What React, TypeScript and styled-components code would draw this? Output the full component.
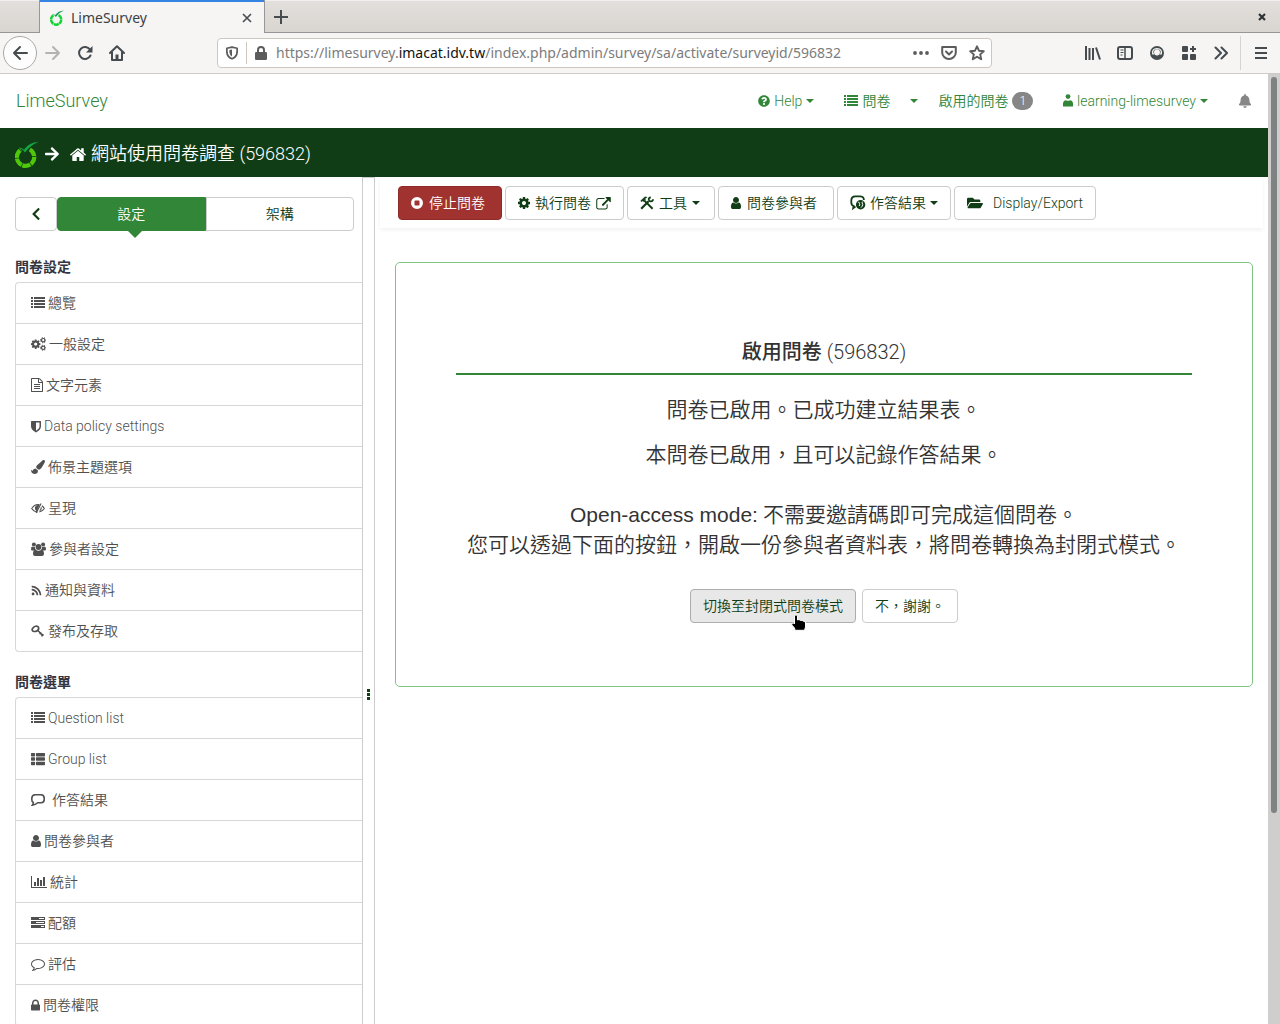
import React from 'react';
import styled, { createGlobalStyle, css } from 'styled-components';
import {
  FaQuestionCircle, FaBell, FaPaintBrush, FaRss, FaFolderOpen, FaArrowRight, FaChevronLeft, FaThList,
} from 'react-icons/fa';

const latin = "Roboto, 'Noto Sans CJK TC', sans-serif";
const chromeFont = "'Noto Sans', sans-serif";
const line = '#d8d8d8';
const green = '#328637';
const deep = '#103d15';

const GlobalStyle = createGlobalStyle`
  * { box-sizing: border-box; }
  body { margin: 0; background: #fff; font-family: ${latin}; font-weight: 350; font-size: 14px; line-height: 20px; color: #333; }
  button, input { font: inherit; color: inherit; margin: 0; }
  button { cursor: pointer; }
  a { color: inherit; text-decoration: none; }
  ul { list-style: none; margin: 0; padding: 0; }
  svg { display: block; flex: none; }
`;

/* ---------- icons ---------- */

type IconDef = { box: string; w: number; h: number; body: React.ReactNode };

const cogPath = 'M1152 896q0-106-75-181t-181-75-181 75-75 181 75 181 181 75 181-75 75-181zm512-109v222q0 12-8 23t-20 13l-185 28q-19 54-39 91 35 50 107 138 10 12 10 25t-9 23q-27 37-99 108t-94 71q-12 0-26-9l-138-108q-44 23-91 38-16 136-29 186-7 28-36 28h-222q-14 0-24.5-8.5t-11.5-21.5l-28-184q-49-16-90-37l-141 107q-10 9-25 9-14 0-25-11-126-114-165-168-7-10-7-23 0-12 8-23 15-21 51-66.5t54-70.5q-27-50-41-99l-183-27q-13-2-21-12.5t-8-23.5v-222q0-12 8-23t19-13l186-28q14-46 39-92-40-57-107-138-10-12-10-24 0-10 9-23 26-36 98.5-107.5t94.5-71.5q13 0 26 10l138 107q44-23 91-38 16-136 29-186 7-28 36-28h222q14 0 24.5 8.5t11.5 21.5l28 184q49 16 90 37l142-107q9-9 24-9 13 0 25 10 129 119 165 170 7 8 7 22 0 12-8 23-15 21-51 66.5t-54 70.5q26 50 41 98l183 28q13 2 21 12.5t8 23.5z';

const icons: Record<string, IconDef> = {
  list: {
    box: '0 0 14 14', w: 14, h: 14,
    body: <path d="M0 1h2v2H0zM3 1h11v2H3zM0 4h2v2H0zM3 4h11v2H3zM0 7h2v2H0zM3 7h11v2H3zM0 10h2v2H0zM3 10h11v2H3z" />,
  },
  cog: { box: '128 128 1536 1536', w: 12, h: 12, body: <path d={cogPath} /> },
  cogs: {
    box: '0 0 15 14', w: 15, h: 14,
    body: (
      <>
        <g transform="translate(-0.9 1.6) scale(0.0062)"><path d={cogPath} /></g>
        <g fill="none" stroke="currentColor">
          <circle cx="12.2" cy="3.2" r="1.7" strokeWidth="1.2" />
          <circle cx="12.2" cy="10.8" r="1.7" strokeWidth="1.2" />
          <path strokeWidth="1" strokeDasharray="1.2 1.2" d="M9.6 3.2a2.6 2.6 0 1 1 5.2 0a2.6 2.6 0 1 1-5.2 0M9.6 10.8a2.6 2.6 0 1 1 5.2 0a2.6 2.6 0 1 1-5.2 0" />
        </g>
      </>
    ),
  },
  file: {
    box: '128 0 1536 1792', w: 12, h: 14,
    body: <path d="M1596 380q28 28 48 76t20 88v1152q0 40-28 68t-68 28h-1344q-40 0-68-28t-28-68v-1600q0-40 28-68t68-28h896q40 0 88 20t76 48zm-444-244v376h376q-10-29-22-41l-313-313q-12-12-41-22zm384 1528v-1024h-416q-40 0-68-28t-28-68v-416h-768v1536h1280zm-1024-864q0-14 9-23t23-9h704q14 0 23 9t9 23v64q0 14-9 23t-23 9h-704q-14 0-23-9t-9-23v-64zm736 224q14 0 23 9t9 23v64q0 14-9 23t-23 9h-704q-14 0-23-9t-9-23v-64q0-14 9-23t23-9h704zm0 256q14 0 23 9t9 23v64q0 14-9 23t-23 9h-704q-14 0-23-9t-9-23v-64q0-14 9-23t23-9h704z" />,
  },
  shield: {
    box: '0 0 10 13', w: 10, h: 13,
    body: <path fillRule="evenodd" d="M.6 1h8.8q.6 0 .6.6V6.600C10 9.200 7.600 11.200 5 12.400C2.400 11.200 0 9.200 0 6.600V1.600Q0 1 .6 1zM5 2.500V10.700C6.800 9.700 8.500 8.200 8.500 6.600V2.500z" />,
  },
  eye: {
    box: '0 0 14 14', w: 14, h: 14,
    body: (
      <g fill="none" stroke="currentColor" strokeWidth="1.1">
        <path d="M6.600 11.100Q3 10.800.7 7.500Q3.200 3.600 7 3.500L8.600 3.700M10.900 4.800Q12.500 5.900 13.300 7.500Q11.600 10.400 8.300 11M10.100 2.600L5.200 12" />
        <path d="M7.600 4.500Q4.600 4.600 4.500 7.200Q4.600 8.700 5.600 9.500z" fill="currentColor" />
        <path d="M10.200 6.200Q10.500 8.600 8.700 9.700" />
      </g>
    ),
  },
  users: {
    box: '0 0 15 14', w: 15, h: 14,
    body: (
      <>
        <circle cx="2.900" cy="2.500" r="2" /><circle cx="12.100" cy="2.500" r="2" />
        <path d="M0 7.500Q0 4.500 1.200 4.500Q3 5.500 4 4.800Q3.700 6.800 4.900 7.900L3.600 8.500H1.200Q0 8.400 0 7.500zM15 7.500Q15 4.500 13.800 4.500Q12 5.500 11 4.800Q11.300 6.800 10.100 7.900L11.400 8.500H13.800Q15 8.400 15 7.500z" />
        <circle cx="7.500" cy="5" r="2.900" />
        <path d="M2 12Q2 8 4.400 7.600Q7.500 10 10.600 7.600Q13 8 13 12Q12.900 13.900 11 14H4Q2.100 13.900 2 12z" />
      </>
    ),
  },
  key: {
    box: '0 0 14 14', w: 14, h: 14,
    body: (
      <g fill="none" stroke="currentColor">
        <path d="M7.700 4.800Q7.800 2.300 5.400 2Q2.600 2.300 1.200 5Q.9 7.300 3.100 7.500Q6.200 7.700 7.700 4.800z" strokeWidth="1.700" />
        <path d="M6.600 6.300L12.300 11.900M8.600 10.100l1.600-1.600M10.400 12.200l2-2" strokeWidth="1.500" />
      </g>
    ),
  },
  comment: {
    box: '0 0 14 14', w: 14, h: 14,
    body: <path d="M4.200 1.700h5.900q3.100.2 3.100 3.500v1.200q0 3.100-3.100 3.400H6.700Q4.500 12 1.300 12.200Q2.400 11 2.300 9.400Q.8 8.600.8 6.400V5.200Q.9 1.900 4.200 1.700z" fill="none" stroke="currentColor" strokeWidth="1.600" />,
  },
  comments: {
    box: '0 0 16 16', w: 16, h: 16,
    body: (
      <>
        <path d="M5.500 11.600L3.200 13.200L3.600 11Q1.300 10.200 1.300 7.500V5Q1.600 1.600 5 1.400H10.500Q13.900 1.600 13.900 5" fill="none" stroke="currentColor" strokeWidth="1.800" />
        <circle cx="10.600" cy="9.700" r="4.700" />
        <path d="M8.200 7.200Q9.600 7 9.500 8.500Q10.200 9.800 9.200 11M12.600 6.600Q11.200 8 12.800 9.200Q12.400 11.600 11 12.600" fill="none" stroke="#fff" strokeWidth="1" />
      </>
    ),
  },
  user: {
    box: '256 128 1280 1536', w: 10, h: 12,
    body: <path d="M1536 1399q0 109-62.500 187t-150.500 78h-854q-88 0-150.500-78t-62.500-187q0-85 8.500-160.500t31.500-152 58.500-131 94-89 134.500-34.500q131 128 313 128t313-128q76 0 134.500 34.500t94 89 58.500 131 31.500 152 8.500 160.500zm-256-887q0 159-112.500 271.500t-271.500 112.500-271.500-112.500-112.500-271.500 112.500-271.500 271.500-112.500 271.500 112.500 112.500 271.500z" />,
  },
  person: {
    box: '0 0 10 14', w: 10, h: 14,
    body: <><circle cx="5" cy="2.600" r="2.400" /><path d="M0 12.400V9.600Q.2 6.300 3 6.200Q5 7.400 7 6.200Q9.800 6.300 10 9.600V12.400z" /></>,
  },
  chart: {
    box: '0 128 2048 1536', w: 16, h: 12,
    body: <path d="M640 896v512h-256v-512h256zm384-512v1024h-256v-1024h256zm1024 1152v128h-2048v-1536h128v1408h1920zm-640-896v768h-256v-768h256zm384-384v1152h-256v-1152h256z" />,
  },
  tasks: {
    box: '0 0 14 14', w: 14, h: 14,
    body: <path fillRule="evenodd" d="M0 1h14v3H0zM8 2h5v1H8zM0 5h14v3H0zM5 6h8v1H5zM0 9h14v3H0zM10 10h3v1h-3z" />,
  },
  bubble: {
    box: '0 128 1792 1664', w: 14, h: 13,
    body: <path d="M896 384q-204 0-381.500 69.500t-282 187.500-104.500 255q0 112 71.500 213.500t201.500 175.500l87 50-27 96q-24 91-70 172 152-63 275-171l43-38 57 6q69 8 130 8 204 0 381.500-69.500t282-187.500 104.500-255-104.500-255-282-187.500-381.500-69.500zm896 512q0 174-120 321.500t-326 233-450 85.500q-70 0-145-8-198 175-460 242-49 14-114 22h-5q-15 0-27-10.500t-16-27.500v-1q-3-4-.5-12t2-10 4.500-9.500l6-9 7-8.500 8-9q7-8 31-34.500t34.500-38 31-39.500 32.500-51 27-59 26-76q-157-89-247.500-220t-90.500-281q0-174 120-321.500t326-233 450-85.500 450 85.500 326 233 120 321.500z" />,
  },
  lock: {
    box: '320 128 1152 1408', w: 9, h: 12,
    body: <path d="M640 768h512v-192q0-106-75-181t-181-75-181 75-75 181v192zm832 96v576q0 40-28 68t-68 28h-960q-40 0-68-28t-28-68v-576q0-40 28-68t68-28h32v-192q0-184 132-316t316-132 316 132 132 316v192h32q40 0 68 28t28 68z" />,
  },
  home: {
    box: '90 240 1612 1300', w: 16, h: 13,
    body: <path d="M1472 992v480q0 26-19 45t-45 19h-384v-384h-256v384h-384q-26 0-45-19t-19-45v-480q0-1 .5-3t.5-3l575-474 575 474q1 2 1 6zm223-69l-62 74q-8 9-21 11h-3q-13 0-21-7l-692-577-692 577q-12 8-24 7-13-2-21-11l-62-74q-8-10-7-23.500t11-21.500l719-599q32-26 76-26t76 26l244 204v-195q0-14 9-23t23-9h192q14 0 23 9t9 23v408l219 182q10 8 11 21.500t-7 23.500z" />,
  },
  external: {
    box: '0 0 1792 1600', w: 15, h: 13,
    body: <path d="M1408 928v320q0 119-84.500 203.500t-203.500 84.500h-832q-119 0-203.500-84.500t-84.500-203.500v-832q0-119 84.500-203.500t203.500-84.500h704q14 0 23 9t9 23v64q0 14-9 23t-23 9h-704q-66 0-113 47t-47 113v832q0 66 47 113t113 47h832q66 0 113-47t47-113v-320q0-14 9-23t23-9h64q14 0 23 9t9 23zm384-864v512q0 26-19 45t-45 19-45-19l-176-176-652 652q-10 10-23 10t-23-10l-114-114q-10-10-10-23t10-23l652-652-176-176q-19-19-19-45t19-45 45-19h512q26 0 45 19t19 45z" />,
  },
  stop: {
    box: '0 0 12 12', w: 12, h: 12,
    body: <path fillRule="evenodd" d="M6 0a6 6 0 1 1 0 12a6 6 0 1 1 0-12zM4.200 3.500q-.7 0-.7.7v3.600q0 .7.7.7h3.600q.7 0 .7-.7V4.200q0-.7-.7-.7z" />,
  },
  tools: {
    box: '0 0 14 14', w: 14, h: 14,
    body: (
      <g fill="none" stroke="currentColor">
        <path d="M1.200 12.800L8.600 5.300" strokeWidth="2.200" />
        <path d="M10.800 1.300Q8.600 1.600 8.700 3.600Q9.200 5.600 11 5.400Q12.900 5.200 13 3.200" strokeWidth="1.800" />
        <path d="M4.400 4.600L12.600 12.800" strokeWidth="2" />
        <path d="M.6 4.800L4.700.9Q6.200.6 7.200 1.400L5.200 2.400L5.500 3.900L3.500 5.700L2.500 4.800L1.700 5.900z" fill="currentColor" strokeWidth=".3" />
      </g>
    ),
  },
  /* browser chrome */
  back: { box: '0 0 16 16', w: 16, h: 16, body: <path d="M15 8H2M8 2L2 8l6 6" fill="none" stroke="currentColor" strokeWidth="2" strokeLinecap="round" strokeLinejoin="round" /> },
  forward: { box: '0 0 16 16', w: 16, h: 16, body: <path d="M1 8h13M8 2l6 6-6 6" fill="none" stroke="currentColor" strokeWidth="2" strokeLinecap="round" strokeLinejoin="round" /> },
  reload: {
    box: '0 0 16 16', w: 16, h: 16,
    body: <><path d="M13 4.500A6 6 0 1 0 13.500 10.500" fill="none" stroke="currentColor" strokeWidth="2" strokeLinecap="round" /><path d="M15.500 1v6.500H9z" /></>,
  },
  house: {
    box: '0 0 16 16', w: 16, h: 16,
    body: (
      <>
        <path d="M1 8L8 1.200L15 8" fill="none" stroke="currentColor" strokeWidth="2" strokeLinecap="round" strokeLinejoin="round" />
        <path d="M3 7v8h10V7" fill="none" stroke="currentColor" strokeWidth="2" strokeLinejoin="round" />
        <path d="M6.500 9.500h3V15h-3z" />
      </>
    ),
  },
  guard: {
    box: '0 0 14 16', w: 12, h: 14,
    body: (
      <>
        <path d="M7 1.200L13 2.500V7Q12.600 12.500 7 14.800Q1.400 12.500 1 7V2.500z" fill="none" stroke="currentColor" strokeWidth="2" strokeLinejoin="round" />
        <path d="M7 4v8Q4 10 4 7V4.600z" />
      </>
    ),
  },
  padlock: {
    box: '0 0 12 14', w: 12, h: 14,
    body: <><path d="M3 7V4a3 3 0 0 1 6 0v3" fill="none" stroke="currentColor" strokeWidth="2" /><rect y="6" width="12" height="8" rx="1.200" /></>,
  },
  dots: { box: '0 0 16 4', w: 16, h: 4, body: <><circle cx="2" cy="2" r="1.900" /><circle cx="8" cy="2" r="1.900" /><circle cx="14" cy="2" r="1.900" /></> },
  pocket: {
    box: '0 0 16 14', w: 16, h: 14,
    body: <g fill="none" stroke="currentColor" strokeWidth="2" strokeLinecap="round" strokeLinejoin="round"><path d="M1.200 1h13.600v5.500a6.800 6.500 0 0 1-13.600 0z" /><path d="M5 5.500l3 3 3-3" /></g>,
  },
  star: { box: '0 0 16 16', w: 16, h: 16, body: <path d="M8 1.300l2 4.400 4.800.5-3.600 3.200 1 4.900L8 11.800l-4.200 2.500 1-4.900L1.200 6.200 6 5.700z" fill="none" stroke="currentColor" strokeWidth="1.900" strokeLinejoin="round" /> },
  library: { box: '0 0 16 14', w: 16, h: 14, body: <path d="M1 0v14M4.500 2v12M8 2v12M11 1.500l4 12" fill="none" stroke="currentColor" strokeWidth="2" /> },
  sidebar: {
    box: '0 0 16 14', w: 16, h: 14,
    body: <g fill="none" stroke="currentColor"><rect x="1" y="1" width="14" height="12" rx="2" strokeWidth="2" /><path d="M8 1v12" strokeWidth="1.500" /><path d="M3.500 4h3M3.500 6.500h3M3.500 9h2" strokeWidth="1" /></g>,
  },
  account: {
    box: '0 0 14 14', w: 14, h: 14,
    body: <path fillRule="evenodd" d="M7 0a7 7 0 1 1 0 14a7 7 0 1 1 0-14zM2.200 8.400Q.8 2.100 7 1.900Q13.200 2.100 11.800 8.400H9.600Q10.700 7.200 10.700 5.700Q10.300 3 7 2.900Q3.700 3 3.300 5.700Q3.300 7.200 4.400 8.400zM7 3.200q-3 .2-3 3.200q.3 2.800 3 3q2.700-.2 3-3q0-3-3-3.200z" />,
  },
  blocks: {
    box: '0 0 14 14', w: 14, h: 14,
    body: <><rect width="6" height="6" rx="1" /><rect y="8" width="6" height="6" rx="1" /><rect x="8" y="8" width="6" height="6" rx="1" /><path d="M10 0h2v2h2v2h-2v2h-2V4H8V2h2z" /></>,
  },
  more: { box: '0 0 14 14', w: 14, h: 14, body: <path d="M1.500 1.500L7 7l-5.500 5.500M7.500 1.500L13 7l-5.500 5.500" fill="none" stroke="currentColor" strokeWidth="2" strokeLinecap="round" strokeLinejoin="round" /> },
  menu: { box: '0 0 12 12', w: 12, h: 12, body: <path d="M0 1h12M0 6h12M0 11h12" stroke="currentColor" strokeWidth="2" /> },
  cross: { box: '0 0 10 10', w: 10, h: 10, body: <path d="M1 1l8 8M9 1l-8 8" stroke="currentColor" strokeWidth="1.600" /> },
  closeWindow: { box: '0 0 8 8', w: 8, h: 8, body: <path d="M1 1l6 6M7 1l-6 6" stroke="currentColor" strokeWidth="2.200" /> },
  plus: { box: '0 0 14 14', w: 14, h: 14, body: <path d="M7 0v14M0 7h14" stroke="currentColor" strokeWidth="2" /> },
};

function Icon({ name }: { name: keyof typeof icons }) {
  const icon = icons[name];
  return (
    <svg viewBox={icon.box} width={icon.w} height={icon.h} fill="currentColor" aria-hidden="true">
      {icon.body}
    </svg>
  );
}

function LimeLogo({ width, height, ring, leaf }: { width: number; height: number; ring: string; leaf: string }) {
  return (
    <svg viewBox="0 0 24 27" width={width} height={height} aria-hidden="true">
      <path d="M14.800 8.500A8.700 8.700 0 1 1 6 8.700" fill="none" stroke={ring} strokeWidth="4.200" strokeDasharray="8.200 .7" />
      <path d="M3.500 6.200Q6.500 6.600 9 8.400Q14 1.600 23.800.8Q15 4.500 10 11.600Q7.500 8 3.500 6.200z" fill={leaf} />
    </svg>
  );
}

/* ---------- browser chrome ---------- */

const Window = styled.div`
  display: flex;
  flex-direction: column;
  height: 100vh;
  overflow: hidden;
`;

const TabStrip = styled.header`
  display: flex;
  flex: none;
  height: 33px;
  padding-left: 39px;
  background: linear-gradient(#e2dfdc, #d9d5d0);
  border-top: 1px solid #f2f0ee;
  border-bottom: 1px solid #979797;
  font-family: ${chromeFont};
  font-weight: 400;
  color: #3c4144;
`;

const Tab = styled.div`
  display: flex;
  align-items: center;
  gap: 7px;
  width: 226px;
  height: 33px;
  margin-top: -1px;
  padding: 2px 12px 0 10px;
  border: solid #979797;
  border-width: 0 1px;
  background: #f6f5f4;
  box-shadow: inset 0 2px #3584e4;
  font-size: 14px;
`;

const TabTitle = styled.span`
  flex: 1;
`;

const IconButton = styled.button<{ $w?: number; $muted?: boolean; $round?: boolean }>`
  display: flex;
  align-items: center;
  justify-content: center;
  flex: none;
  width: ${p => p.$w ?? 32}px;
  height: 32px;
  padding: 0;
  border: 0;
  background: none;
  color: ${p => (p.$muted ? '#b3b3b2' : '#454b4e')};
  ${p => p.$round && css`
    width: 34px;
    height: 34px;
    border: 1px solid #a9a9a8;
    border-radius: 50%;
    background: #fdfdfd;
  `}
`;

const TabClose = styled(IconButton)`
  height: 20px;
`;

const WindowClose = styled(IconButton)`
  margin-left: auto;
  color: #2e3436;
`;

const NavBar = styled.div`
  display: flex;
  align-items: center;
  flex: none;
  height: 41px;
  padding: 0 3px;
  background: #f6f5f4;
  border-bottom: 1px solid #ccc9c6;
`;

const AddressBar = styled.div`
  display: flex;
  align-items: center;
  flex: 1;
  max-width: 775px;
  height: 30px;
  margin-left: 84px;
  padding-left: 8px;
  border: 1px solid #cdc7c2;
  border-radius: 4px;
  background: #fff;
  color: #5c5c5c;
`;

const AddressDivider = styled.span`
  width: 1px;
  height: 22px;
  margin: 0 8px;
  background: #cdc7c2;
`;

const Address = styled.div`
  flex: 1;
  margin-left: 9px;
  overflow: hidden;
  white-space: nowrap;
  font: 400 14px/20px ${chromeFont};
  color: #7c7c7c;

  b { font-weight: 400; color: #111; }
`;

const AddressButton = styled(IconButton)`
  color: #5c5c5c;
`;

const ChromeTools = styled.div`
  display: flex;
  align-items: center;
  margin-left: auto;
`;

const ChromeDivider = styled.span`
  width: 1px;
  height: 34px;
  margin: 0 4px 0 3px;
  background: #d6d3d0;
`;

/* ---------- page ---------- */

const Viewport = styled.div`
  display: flex;
  flex: 1;
  min-height: 0;
`;

const Page = styled.div`
  display: flex;
  flex-direction: column;
  flex: 1;
  min-width: 0;
`;

const ScrollTrack = styled.div`
  width: 12px;
  padding: 3px;
  background: #cfcecd;
`;

const ScrollThumb = styled.div`
  height: 78%;
  border-radius: 3px;
  background: #7e8282;
`;

const TopBar = styled.nav`
  display: flex;
  align-items: center;
  flex: none;
  gap: 30px;
  height: 54px;
  padding: 0 16px;
  color: ${green};
`;

const Brand = styled.a`
  margin-right: auto;
  font-size: 18px;
`;

const TopLink = styled.a`
  display: flex;
  align-items: center;
  gap: 4px;
`;

const TopGroup = styled.div`
  display: flex;
  align-items: center;
  gap: 20px;
`;

const PlainButton = styled.button`
  display: flex;
  align-items: center;
  padding: 0;
  border: 0;
  background: none;
`;

const Caret = styled.span`
  width: 0;
  height: 0;
  border: 4px solid transparent;
  border-top-color: currentColor;
  border-bottom: 0;
`;

const Badge = styled.span`
  padding: 0 7px;
  border-radius: 9px;
  background: #868686;
  color: #fff;
  font-size: 12px;
  line-height: 18px;
`;

const Bell = styled(PlainButton)`
  color: #868686;
`;

const TitleBar = styled.div`
  display: flex;
  align-items: center;
  flex: none;
  gap: 5px;
  height: 49px;
  padding: 3px 15px 0;
  background: ${deep};
  color: #fff;
`;

const SurveyTitle = styled.h1`
  display: flex;
  align-items: center;
  gap: 5px;
  margin: 0 0 0 5px;
  font-size: 18px;
  font-weight: 350;
`;

const Body = styled.div`
  display: flex;
  flex: 1;
  min-height: 0;
`;

const Sidebar = styled.aside`
  flex: none;
  width: 363px;
  padding: 20px 0 0 15px;
  overflow: hidden;
  border-right: 1px solid #ccc;
`;

const SideTabs = styled.div`
  display: flex;
  margin: 0 8px 26px 0;
`;

const buttonBase = css`
  display: flex;
  align-items: center;
  height: 34px;
  border: 1px solid #ccc;
  border-radius: 4px;
  background: #fff;
  color: ${deep};
`;

const CollapseButton = styled.button`
  ${buttonBase}
  justify-content: center;
  width: 42px;
  padding: 0;
`;

const SideTab = styled.button<{ $active?: boolean }>`
  ${buttonBase}
  position: relative;
  flex: 1;
  justify-content: center;
  border-radius: 0 4px 4px 0;
  ${p => p.$active && css`
    border-color: ${green};
    border-radius: 4px 0 0 4px;
    background: ${green};
    color: #fff;

    &::after {
      content: '';
      position: absolute;
      top: 100%;
      left: 50%;
      border: 8px solid transparent;
      border-top-color: ${green};
      border-bottom: 0;
      margin-left: -4px;
    }
  `}
`;

const MenuHeading = styled.h2`
  margin: 0 0 5px;
  font-size: 14px;
  line-height: 20px;
  font-weight: 700;
  color: #333641;
`;

const Menu = styled.ul`
  margin-bottom: 20px;
  border: 1px solid ${line};
  border-right: 0;
  border-radius: 4px 0 0 4px;
`;

const MenuItem = styled.li`
  & + & { border-top: 1px solid ${line}; }
`;

const MenuLink = styled.a<{ $gap?: number }>`
  display: flex;
  align-items: center;
  gap: ${p => p.$gap ?? 3}px;
  height: 40px;
  padding: 0 15px;
  color: #505050;
`;

const Resizer = styled.div`
  display: flex;
  align-items: center;
  justify-content: center;
  flex: none;
  width: 12px;
  border: 1px solid #ccc;
  border-width: 1px 1px 0 0;
`;

const Grip = styled.span`
  width: 3px;
  height: 11px;
  margin-top: 187px;
  background: repeating-linear-gradient(${deep} 0 3px, transparent 3px 4px);
`;

const Main = styled.main`
  flex: 1;
  min-width: 0;
  padding: 0 5px;
`;

const Toolbar = styled.div`
  display: flex;
  gap: 3px;
  padding: 9px 18px 8px;
  box-shadow: 0 2px 4px rgba(0, 0, 0, 0.06);
`;

const Button = styled.button<{ $danger?: boolean; $hover?: boolean; $gap?: number; $end?: number }>`
  ${buttonBase}
  gap: ${p => p.$gap ?? 4}px;
  padding: 0 ${p => p.$end ?? 12}px 0 12px;
  white-space: nowrap;
  ${p => p.$danger && css`
    border-color: #8f2c29;
    background: #a0332f;
    color: #fff;
  `}
  ${p => p.$hover && css`
    border-color: #adadad;
    background: #e8e8e8;
  `}
`;

const Panel = styled.section`
  margin: 34px 10px 0 15px;
  padding: 74px 60px 63px;
  border: 1px solid #80c483;
  border-radius: 5px;
  text-align: center;
`;

const PanelTitle = styled.h3`
  margin: 0 0 20px;
  padding-bottom: 6px;
  border-bottom: 2px solid ${green};
  font-size: 20px;
  line-height: 30px;
  font-weight: 350;

  b { font-weight: 500; }
`;

const Text = styled.p<{ $bottom?: number }>`
  margin: 0 0 ${p => p.$bottom ?? 15}px;
  font-size: 21px;
  line-height: 30px;

  b { font-family: 'Liberation Sans', sans-serif; font-weight: 400; }
`;

const Actions = styled.div`
  display: flex;
  justify-content: center;
  gap: 6px;
`;

const Pointer = styled.svg`
  position: absolute;
  left: 101px;
  top: 25px;
`;

const Hovered = styled.div`
  position: relative;
`;

type Entry = { icon: React.ReactNode; label: string; gap?: number };

const settings: Entry[] = [
  { icon: <Icon name="list" />, label: '總覽' },
  { icon: <Icon name="cogs" />, label: '一般設定' },
  { icon: <Icon name="file" />, label: '文字元素' },
  { icon: <Icon name="shield" />, label: 'Data policy settings' },
  { icon: <FaPaintBrush size={14} />, label: '佈景主題選項' },
  { icon: <Icon name="eye" />, label: '呈現' },
  { icon: <Icon name="users" />, label: '參與者設定' },
  { icon: <FaRss size={11} />, label: '通知與資料' },
  { icon: <Icon name="key" />, label: '發布及存取' },
];

const surveyMenu: Entry[] = [
  { icon: <Icon name="list" />, label: 'Question list' },
  { icon: <FaThList size={14} />, label: 'Group list' },
  { icon: <Icon name="comment" />, label: '作答結果', gap: 7 },
  { icon: <Icon name="user" />, label: '問卷參與者' },
  { icon: <Icon name="chart" />, label: '統計' },
  { icon: <Icon name="tasks" />, label: '配額' },
  { icon: <Icon name="bubble" />, label: '評估' },
  { icon: <Icon name="lock" />, label: '問卷權限' },
];

function SideMenu({ title, entries }: { title: string; entries: Entry[] }) {
  return (
    <>
      <MenuHeading>{title}</MenuHeading>
      <Menu>
        {entries.map(e => (
          <MenuItem key={e.label}>
            <MenuLink href="#" $gap={e.gap}>{e.icon}{e.label}</MenuLink>
          </MenuItem>
        ))}
      </Menu>
    </>
  );
}

export default function App() {
  return (
    <>
      <GlobalStyle />
      <Window>
        <TabStrip>
          <Tab>
            <LimeLogo width={14} height={16} ring="#12d332" leaf="#16a055" />
            <TabTitle>LimeSurvey</TabTitle>
            <TabClose $w={10} aria-label="Close tab"><Icon name="cross" /></TabClose>
          </Tab>
          <IconButton aria-label="New tab"><Icon name="plus" /></IconButton>
          <WindowClose $w={36} aria-label="Close window"><Icon name="closeWindow" /></WindowClose>
        </TabStrip>

        <NavBar>
          <IconButton $round aria-label="Back"><Icon name="back" /></IconButton>
          <IconButton $muted aria-label="Forward"><Icon name="forward" /></IconButton>
          <IconButton aria-label="Reload"><Icon name="reload" /></IconButton>
          <IconButton aria-label="Home"><Icon name="house" /></IconButton>
          <AddressBar>
            <Icon name="guard" />
            <AddressDivider />
            <Icon name="padlock" />
            <Address>https://limesurvey.<b>imacat.idv.tw</b>/index.php/admin/survey/sa/activate/surveyid/596832</Address>
            <AddressButton $w={28} aria-label="Page actions"><Icon name="dots" /></AddressButton>
            <AddressButton $w={28} aria-label="Save to Pocket"><Icon name="pocket" /></AddressButton>
            <AddressButton $w={28} aria-label="Bookmark"><Icon name="star" /></AddressButton>
          </AddressBar>
          <ChromeTools>
            <IconButton aria-label="Library"><Icon name="library" /></IconButton>
            <IconButton aria-label="Sidebars"><Icon name="sidebar" /></IconButton>
            <IconButton aria-label="Account"><Icon name="account" /></IconButton>
            <IconButton aria-label="Extensions"><Icon name="blocks" /></IconButton>
            <IconButton aria-label="More tools"><Icon name="more" /></IconButton>
            <ChromeDivider />
            <IconButton aria-label="Menu"><Icon name="menu" /></IconButton>
          </ChromeTools>
        </NavBar>

        <Viewport>
          <Page>
            <TopBar>
              <Brand href="#">LimeSurvey</Brand>
              <TopLink href="#"><FaQuestionCircle size={12} />Help <Caret /></TopLink>
              <TopGroup>
                <TopLink href="#"><Icon name="list" />問卷</TopLink>
                <PlainButton aria-label="問卷"><Caret /></PlainButton>
                <TopLink href="#">啟用的問卷 <Badge>1</Badge></TopLink>
              </TopGroup>
              <TopLink href="#"><Icon name="person" />learning-limesurvey <Caret /></TopLink>
              <Bell aria-label="Notifications"><FaBell size={14} /></Bell>
            </TopBar>

            <TitleBar>
              <LimeLogo width={24} height={27} ring="#4fc80c" leaf="#12a543" />
              <FaArrowRight size={16} />
              <SurveyTitle><Icon name="home" />網站使用問卷調查 (596832)</SurveyTitle>
            </TitleBar>

            <Body>
              <Sidebar>
                <SideTabs>
                  <CollapseButton aria-label="Collapse"><FaChevronLeft size={14} /></CollapseButton>
                  <SideTab $active>設定</SideTab>
                  <SideTab>架構</SideTab>
                </SideTabs>
                <SideMenu title="問卷設定" entries={settings} />
                <SideMenu title="問卷選單" entries={surveyMenu} />
              </Sidebar>
              <Resizer><Grip /></Resizer>

              <Main>
                <Toolbar>
                  <Button $danger $gap={6} $end={16}><Icon name="stop" />停止問卷</Button>
                  <Button $gap={5}><Icon name="cog" />執行問卷<Icon name="external" /></Button>
                  <Button $gap={5} $end={14}><Icon name="tools" />工具<Caret /></Button>
                  <Button $gap={6} $end={16}><Icon name="user" />問卷參與者</Button>
                  <Button><Icon name="comments" />作答結果<Caret /></Button>
                  <Button $gap={10}><FaFolderOpen size={16} />Display/Export</Button>
                </Toolbar>

                <Panel>
                  <PanelTitle><b>啟用問卷</b> (596832)</PanelTitle>
                  <Text>問卷已啟用。已成功建立結果表。</Text>
                  <Text $bottom={30}>本問卷已啟用，且可以記錄作答結果。</Text>
                  <Text $bottom={29}>
                    <b>Open-access mode:</b> 不需要邀請碼即可完成這個問卷。<br />
                    您可以透過下面的按鈕，開啟一份參與者資料表，將問卷轉換為封閉式模式。
                  </Text>
                  <Actions>
                    <Hovered>
                      <Button $hover>切換至封閉式問卷模式</Button>
                      <Pointer viewBox="0 0 16 17" width="16" height="17" aria-hidden="true">
                        <path d="M3.500 1.500Q5 .3 6.500 1.500V6L8 5.500L9.500 6.500L11 6.300L12.500 7.300L14.500 8V13L13.500 16.300H4L3.500 14L.8 11V9.500L2.500 9L3.500 10z" fill="#000" stroke="#fff" strokeWidth="1" />
                      </Pointer>
                    </Hovered>
                    <Button>不，謝謝。</Button>
                  </Actions>
                </Panel>
              </Main>
            </Body>
          </Page>
          <ScrollTrack><ScrollThumb /></ScrollTrack>
        </Viewport>
      </Window>
    </>
  );
}
